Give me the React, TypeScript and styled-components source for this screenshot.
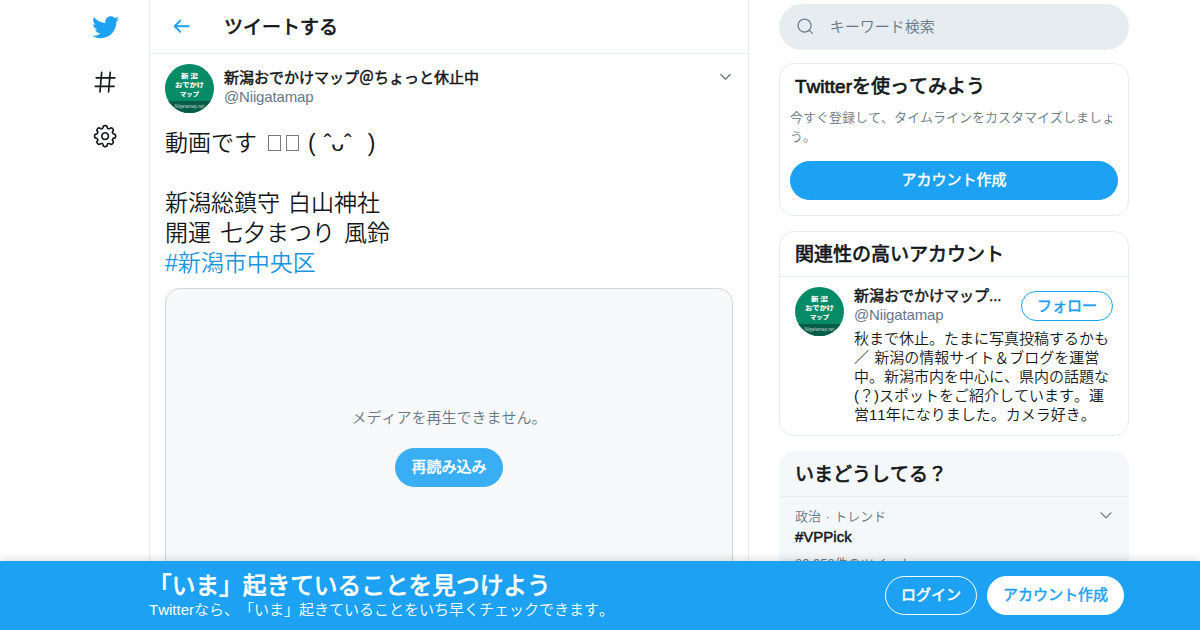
import React from "react";
import styled, { createGlobalStyle, css } from "styled-components";

const INK = "#14171a";
const MUTED = "#657786";
const BLUE = "#1da1f2";
const LINE = "#e6ecf0";

const GlobalStyle = createGlobalStyle`
  *, *::before, *::after { box-sizing: border-box; }
  html, body { margin: 0; height: 630px; overflow: hidden; background: #fff; }
  body {
    color: ${INK};
    font: 350 15px/19px "Liberation Sans", "Noto Sans CJK JP", sans-serif;
    font-kerning: none;
    text-spacing-trim: space-all;
  }
`;

const strong = css`
  font-weight: 400;
  -webkit-text-stroke: 0.5px currentColor;
`;

const Page = styled.div`
  height: 630px;
  display: flex;
  flex-direction: column;
  overflow: hidden;
`;

const Frame = styled.div`
  flex: 1;
  min-height: 0;
  display: flex;
`;

const Nav = styled.nav`
  width: 149px;
  flex: none;
  display: flex;
  flex-direction: column;
  align-items: center;
  padding: 13px 0 0 61px;
`;

const NavItem = styled.a<{ $gap?: number }>`
  display: flex;
  justify-content: center;
  height: 28px;
  align-items: center;
  margin-bottom: ${(p) => p.$gap ?? 26}px;
`;

const Primary = styled.main`
  width: 600px;
  flex: none;
  border: solid ${LINE};
  border-width: 0 1px;
  overflow: hidden;
`;

const TopBar = styled.header`
  height: 54px;
  display: flex;
  align-items: center;
  padding: 0 19.5px;
  gap: 32px;
  border-bottom: 1px solid ${LINE};
`;

const Heading = styled.h2`
  margin: 0;
  padding-top: 1px;
  font-size: 19px;
  line-height: 25px;
  ${strong}
  -webkit-text-stroke-width: 0.7px;
`;

const Tweet = styled.article`
  padding: 10px 15px 0;
`;

const Author = styled.div`
  display: flex;
  gap: 10px;
`;

const Names = styled.div`
  flex: 1;
  min-width: 0;
  padding-top: 4px;
`;

const Name = styled.div`
  ${strong}
  height: 19px;
  white-space: nowrap;
`;

const Handle = styled.div`
  color: ${MUTED};
  letter-spacing: -0.15px;
`;

const ChevronSlot = styled.div`
  padding-top: 5px;
`;

const TweetText = styled.div`
  margin-top: 15px;
  font-size: 23px;
  line-height: 30px;
  word-spacing: 1.6px;
`;

const Line = styled.div<{ $spread?: boolean }>`
  height: 30px;
  display: flex;
  white-space: pre;
  ${(p) => p.$spread && css`word-spacing: 2.6px;`}
`;

const HashTag = styled.a`
  color: #1b95e0;
`;

const Glyph = styled.span`
  width: 13px;
  height: 16px;
  margin: 7px 1.5px 0 3px;
  border: 1px solid #77797b;
`;

const Media = styled.section`
  margin-top: 10px;
  height: 320px;
  border: 1px solid #ccd6dd;
  border-radius: 15px;
  background: #f7f9fa;
  display: flex;
  flex-direction: column;
  align-items: center;
  padding-top: 119px;
  gap: 21px;
  color: ${MUTED};
`;

const Pill = styled.button<{ $tone?: "solid" | "soft" | "outline" | "ghost" | "white"; $w?: string; $h?: number }>`
  width: ${(p) => p.$w ?? "auto"};
  height: ${(p) => p.$h ?? 39}px;
  flex: none;
  padding: 0 15px 2px;
  border-radius: 999px;
  border: 1px solid ${BLUE};
  background: ${BLUE};
  color: #fff;
  font: inherit;
  white-space: nowrap;
  ${strong}
  ${(p) => p.$tone === "soft" && css`background: #3aaef4; border-color: #3aaef4;`}
  ${(p) => p.$tone === "outline" && css`background: transparent; color: ${BLUE};`}
  ${(p) => p.$tone === "ghost" && css`background: transparent; border-color: #fff;`}
  ${(p) => p.$tone === "white" && css`background: #fff; border-color: #fff; color: ${BLUE};`}
`;

const Side = styled.aside`
  width: 350px;
  flex: none;
  margin-left: 30px;
  padding-top: 4px;
`;

const Search = styled.div`
  height: 46px;
  border-radius: 23px;
  background: #e6ecf0;
  color: ${MUTED};
  display: flex;
  align-items: center;
  padding: 0 0 1px 16.5px;
  gap: 15.5px;
`;

const Card = styled.section<{ $top: number; $h: number; $filled?: boolean }>`
  margin-top: ${(p) => p.$top}px;
  height: ${(p) => p.$h}px;
  border: 1px solid ${(p) => (p.$filled ? "#f5f8fa" : LINE)};
  border-radius: 15px;
  background: ${(p) => (p.$filled ? "#f5f8fa" : "#fff")};
  overflow: hidden;
`;

const CardTitle = styled.div<{ $plain?: boolean }>`
  height: ${(p) => (p.$plain ? 44 : 45)}px;
  display: flex;
  align-items: center;
  padding: 0 15px;
  border-bottom: ${(p) => (p.$plain ? "0" : `1px solid ${LINE}`)};
`;

const SignUpBody = styled.div`
  padding: 0 10px;
`;

const Note = styled.p`
  margin: 0 0 15px;
  font-size: 13px;
  line-height: 19px;
  color: ${MUTED};
  word-break: break-all;
  line-break: anywhere;
`;

const Suggestion = styled.div`
  display: flex;
  gap: 10px;
  padding: 10px 15px;
`;

const SuggestionBody = styled.div`
  flex: 1;
  min-width: 0;
`;

const SuggestionHead = styled.div`
  display: flex;
  align-items: flex-start;
  justify-content: space-between;
  height: 37px;
`;

const SuggestionNames = styled.div`
  margin-top: -1px;
`;

const FollowSlot = styled.div`
  padding-top: 4px;
`;

const Bio = styled.p`
  margin: 5px 0 0;
  white-space: pre;
  word-spacing: 1px;
`;

const Trend = styled.div`
  display: flex;
  justify-content: space-between;
  padding: 10px 14.5px 10px 15px;
`;

const TrendMeta = styled.div`
  font-size: 13px;
  line-height: 19px;
  color: ${MUTED};
  word-spacing: 0.8px;
`;

const TrendName = styled.div`
  margin: 1px 0 8px;
  ${strong}
`;

const Banner = styled.footer`
  height: 69px;
  flex: none;
  position: relative;
  background: ${BLUE};
  color: #fff;
  box-shadow: 0 0 10px rgba(0, 0, 0, 0.2);
  display: flex;
  align-items: center;
  justify-content: space-between;
  padding: 0 76px 0 149px;
`;

const BannerText = styled.div`
  padding-bottom: 2px;
`;

const BannerTitle = styled.div`
  height: 29px;
  font-size: 23.7px;
  line-height: 30px;
  margin-left: -1px;
  ${strong}
  -webkit-text-stroke-width: 0.8px;
`;

const BannerActions = styled.div`
  display: flex;
  gap: 10px;
`;

const Icon = styled.svg`
  display: block;
  flex: none;
  fill: currentColor;
`;

const AvatarArt = styled.svg`
  display: block;
  flex: none;
  width: 49px;
  height: 49px;
`;

const paths = {
  bird: "M23.643 4.937c-.835.37-1.732.62-2.675.733.962-.576 1.7-1.49 2.048-2.578-.9.534-1.897.922-2.958 1.13-.85-.904-2.06-1.47-3.4-1.47-2.572 0-4.658 2.086-4.658 4.66 0 .364.042.718.12 1.06-3.873-.195-7.304-2.05-9.602-4.868-.4.69-.63 1.49-.63 2.342 0 1.616.823 3.043 2.072 3.878-.764-.025-1.482-.234-2.11-.583v.06c0 2.257 1.605 4.14 3.737 4.568-.392.106-.803.162-1.227.162-.3 0-.593-.028-.877-.082.593 1.85 2.313 3.198 4.352 3.234-1.595 1.25-3.604 1.995-5.786 1.995-.376 0-.747-.022-1.112-.065 2.062 1.323 4.51 2.093 7.14 2.093 8.57 0 13.255-7.098 13.255-13.254 0-.2-.005-.402-.014-.602.91-.658 1.7-1.477 2.323-2.41z",
  hash: "M21 7.337h-3.93l.372-4.272c.036-.412-.27-.775-.682-.812-.417-.03-.776.27-.812.683l-.383 4.4h-6.32l.37-4.27c.037-.413-.27-.776-.68-.813-.42-.03-.777.27-.813.683l-.382 4.4H3.782c-.414 0-.75.337-.75.75s.336.75.75.75H7.61l-.55 6.327H3c-.414 0-.75.336-.75.75s.336.75.75.75h3.93l-.372 4.272c-.036.412.27.775.682.812l.066.003c.385 0 .712-.295.746-.686l.383-4.4h6.32l-.37 4.27c-.036.413.27.776.682.813l.066.003c.385 0 .712-.295.746-.686l.382-4.4h3.957c.413 0 .75-.337.75-.75s-.337-.75-.75-.75H16.39l.55-6.327H21c.414 0 .75-.336.75-.75s-.336-.75-.75-.75zm-6.115 7.826h-6.32l.55-6.326h6.32l-.55 6.326z",
  gear: "M12 8.21c-2.09 0-3.79 1.7-3.79 3.79s1.7 3.79 3.79 3.79 3.79-1.7 3.79-3.79-1.7-3.79-3.79-3.79zm0 6.08c-1.262 0-2.29-1.026-2.29-2.29S10.74 9.71 12 9.71s2.29 1.026 2.29 2.29-1.028 2.29-2.29 2.29zM12.36 22.375h-.722c-1.183 0-2.154-.888-2.262-2.064l-.014-.147c-.025-.287-.207-.533-.472-.644-.286-.12-.582-.065-.798.115l-.116.097c-.868.725-2.253.663-3.06-.14l-.51-.51c-.836-.84-.896-2.154-.14-3.06l.098-.118c.186-.222.23-.523.122-.787-.11-.272-.358-.454-.646-.48l-.15-.014c-1.18-.107-2.067-1.08-2.067-2.262v-.722c0-1.183.888-2.154 2.064-2.262l.156-.014c.285-.025.53-.207.642-.473.11-.27.065-.573-.12-.795l-.094-.116c-.757-.908-.698-2.223.137-3.06l.512-.512c.804-.804 2.188-.865 3.06-.14l.116.098c.218.184.528.23.79.122.27-.112.452-.358.477-.643l.014-.153c.107-1.18 1.08-2.066 2.262-2.066h.722c1.183 0 2.154.888 2.262 2.064l.014.156c.025.285.206.53.472.64.277.117.58.062.794-.117l.12-.102c.867-.723 2.254-.662 3.06.14l.51.512c.836.838.896 2.153.14 3.06l-.1.118c-.188.22-.234.522-.123.788.112.27.36.45.646.478l.152.014c1.18.107 2.067 1.08 2.067 2.262v.723c0 1.183-.888 2.154-2.064 2.262l-.155.014c-.284.024-.53.205-.64.47-.113.272-.067.574.117.795l.1.12c.756.905.696 2.22-.14 3.06l-.51.51c-.807.804-2.19.864-3.06.14l-.115-.096c-.217-.183-.53-.23-.79-.122-.273.114-.455.36-.48.646l-.014.15c-.107 1.173-1.08 2.06-2.262 2.06zm-3.773-4.42c.3 0 .593.06.87.175.79.328 1.324 1.054 1.4 1.896l.014.147c.037.4.367.7.77.7h.722c.4 0 .73-.3.768-.7l.014-.148c.076-.842.61-1.567 1.392-1.892.793-.33 1.696-.182 2.333.35l.113.094c.178.148.366.18.493.18.206 0 .4-.08.546-.227l.51-.51c.284-.284.305-.73.048-1.038l-.1-.12c-.542-.65-.677-1.54-.352-2.323.326-.79 1.052-1.32 1.894-1.397l.155-.014c.397-.037.7-.367.7-.77v-.722c0-.4-.303-.73-.702-.768l-.152-.014c-.846-.078-1.57-.61-1.895-1.393-.326-.788-.19-1.678.353-2.327l.1-.118c.257-.31.236-.756-.048-1.04l-.51-.51c-.146-.147-.34-.227-.546-.227-.127 0-.315.032-.492.18l-.12.1c-.634.528-1.55.67-2.322.354-.788-.327-1.32-1.052-1.397-1.896l-.014-.155c-.035-.397-.365-.7-.767-.7h-.723c-.4 0-.73.303-.768.702l-.014.152c-.076.843-.608 1.568-1.39 1.893-.787.326-1.693.183-2.33-.35l-.118-.096c-.18-.15-.368-.18-.495-.18-.206 0-.4.08-.546.226l-.512.51c-.282.284-.303.73-.046 1.038l.1.118c.54.653.677 1.544.352 2.325-.327.788-1.052 1.32-1.895 1.397l-.156.014c-.397.037-.7.367-.7.77v.722c0 .4.303.73.702.768l.15.014c.848.078 1.573.612 1.897 1.396.325.786.19 1.675-.353 2.325l-.096.115c-.26.31-.238.756.046 1.04l.51.51c.146.147.34.227.546.227.127 0 .315-.03.492-.18l.116-.096c.406-.336.923-.524 1.453-.524z",
  back: "M20 11H7.414l4.293-4.293c.39-.39.39-1.023 0-1.414s-1.023-.39-1.414 0l-6 6c-.39.39-.39 1.023 0 1.414l6 6c.195.195.45.293.707.293s.512-.098.707-.293c.39-.39.39-1.023 0-1.414L7.414 13H20c.553 0 1-.447 1-1s-.447-1-1-1z",
  chevron: "M20.207 8.147c-.39-.39-1.023-.39-1.414 0L12 14.94 5.207 8.147c-.39-.39-1.023-.39-1.414 0-.39.39-.39 1.023 0 1.414l7.5 7.5c.195.196.45.294.707.294s.512-.098.707-.293l7.5-7.5c.39-.39.39-1.022 0-1.413z",
  search: "M21.53 20.47l-3.66-3.66C19.195 15.24 20 13.214 20 11c0-4.97-4.03-9-9-9s-9 4.03-9 9 4.03 9 9 9c2.215 0 4.24-.804 5.808-2.13l3.66 3.66c.147.146.34.22.53.22s.385-.073.53-.22c.295-.293.295-.767.002-1.06zM3.5 11c0-4.135 3.365-7.5 7.5-7.5s7.5 3.365 7.5 7.5-3.365 7.5-7.5 7.5-7.5-3.365-7.5-7.5z",
};

const Pic = ({ name, size, color }: { name: keyof typeof paths; size: number; color?: string }) => (
  <Icon viewBox="0 0 24 24" width={size} height={size} color={color}>
    <path d={paths[name]} />
  </Icon>
);

const Avatar = ({ id }: { id: string }) => (
  <AvatarArt viewBox="0 0 49 49">
    <clipPath id={id}>
      <circle cx="24.5" cy="24.5" r="24.5" />
    </clipPath>
    <g clipPath={`url(#${id})`}>
      <rect width="49" height="49" fill="#078a66" />
      <rect y="37" width="49" height="12" fill="#075c46" />
      <g fill="#fff" textAnchor="middle" fontFamily="'Noto Sans CJK JP', sans-serif" fontWeight="900">
        <text x="24.5" y="13.5" fontSize="5.5" textLength="17" lengthAdjust="spacingAndGlyphs">新 潟</text>
        <text x="24.5" y="22.8" fontSize="6" textLength="29" lengthAdjust="spacingAndGlyphs">おでかけ</text>
        <text x="24.5" y="31.8" fontSize="6" textLength="19" lengthAdjust="spacingAndGlyphs">マップ</text>
        <text x="24.5" y="44" fontSize="4.2" fontWeight="400" fillOpacity="0.8" textLength="30" lengthAdjust="spacingAndGlyphs">Niigatamap.net</text>
      </g>
    </g>
  </AvatarArt>
);

export default function App() {
  return (
    <Page>
      <GlobalStyle />
      <Frame>
        <Nav>
          <NavItem $gap={27}><Pic name="bird" size={28.5} color={BLUE} /></NavItem>
          <NavItem><Pic name="hash" size={26.25} /></NavItem>
          <NavItem><Pic name="gear" size={26.25} /></NavItem>
        </Nav>
        <Primary>
          <TopBar>
            <Pic name="back" size={22.5} color={BLUE} />
            <Heading>ツイートする</Heading>
          </TopBar>
          <Tweet>
            <Author>
              <Avatar id="tweet-avatar" />
              <Names>
                <Name>新潟おでかけマップ＠ちょっと休止中</Name>
                <Handle>@Niigatamap</Handle>
              </Names>
              <ChevronSlot><Pic name="chevron" size={15} color={MUTED} /></ChevronSlot>
            </Author>
            <TweetText>
              <Line><span>{"動画です "}</span><Glyph /><Glyph /><span>{" ( ˆᴗˆ  )"}</span></Line>
              <Line />
              <Line>新潟総鎮守 白山神社</Line>
              <Line $spread>開運 七夕まつり 風鈴</Line>
              <Line><HashTag>#新潟市中央区</HashTag></Line>
            </TweetText>
            <Media>
              <div>メディアを再生できません。</div>
              <Pill $tone="soft">再読み込み</Pill>
            </Media>
          </Tweet>
        </Primary>
        <Side>
          <Search>
            <Pic name="search" size={18.75} />
            <span>キーワード検索</span>
          </Search>
          <Card $top={13} $h={153}>
            <CardTitle $plain><Heading>Twitterを使ってみよう</Heading></CardTitle>
            <SignUpBody>
              <Note>今すぐ登録して、タイムラインをカスタマイズしましょう。</Note>
              <Pill $w="100%">アカウント作成</Pill>
            </SignUpBody>
          </Card>
          <Card $top={15} $h={205}>
            <CardTitle><Heading>関連性の高いアカウント</Heading></CardTitle>
            <Suggestion>
              <Avatar id="suggestion-avatar" />
              <SuggestionBody>
                <SuggestionHead>
                  <SuggestionNames>
                    <Name>新潟おでかけマップ...</Name>
                    <Handle>@Niigatamap</Handle>
                  </SuggestionNames>
                  <FollowSlot><Pill $tone="outline" $h={30}>フォロー</Pill></FollowSlot>
                </SuggestionHead>
                <Bio>{"秋まで休止。たまに写真投稿するかも\n／ 新潟の情報サイト＆ブログを運営\n中。新潟市内を中心に、県内の話題な\n(？)スポットをご紹介しています。運\n営11年になりました。カメラ好き。"}</Bio>
              </SuggestionBody>
            </Suggestion>
          </Card>
          <Card $top={15} $h={300} $filled>
            <CardTitle><Heading>いまどうしてる？</Heading></CardTitle>
            <Trend>
              <div>
                <TrendMeta>政治 · トレンド</TrendMeta>
                <TrendName>#VPPick</TrendName>
                <TrendMeta>80,958件のツイート</TrendMeta>
              </div>
              <Pic name="chevron" size={16} color={MUTED} />
            </Trend>
          </Card>
        </Side>
      </Frame>
      <Banner>
        <BannerText>
          <BannerTitle>「いま」起きていることを見つけよう</BannerTitle>
          <div>Twitterなら、「いま」起きていることをいち早くチェックできます。</div>
        </BannerText>
        <BannerActions>
          <Pill $tone="ghost">ログイン</Pill>
          <Pill $tone="white">アカウント作成</Pill>
        </BannerActions>
      </Banner>
    </Page>
  );
}
